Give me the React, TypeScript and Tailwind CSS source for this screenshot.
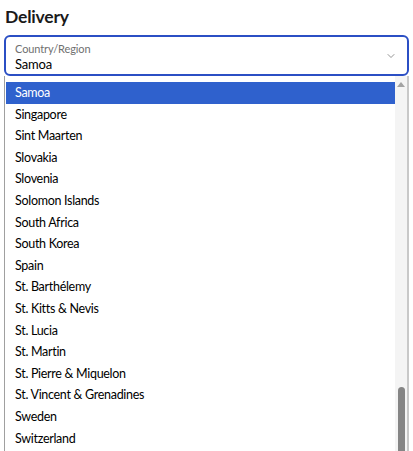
import { ChevronDown } from 'lucide-react';

const COUNTRIES = [
  'Samoa',
  'Singapore',
  'Sint Maarten',
  'Slovakia',
  'Slovenia',
  'Solomon Islands',
  'South Africa',
  'South Korea',
  'Spain',
  'St. Barthélemy',
  'St. Kitts & Nevis',
  'St. Lucia',
  'St. Martin',
  'St. Pierre & Miquelon',
  'St. Vincent & Grenadines',
  'Sweden',
  'Switzerland',
];

export default function App() {
  const selected = 'Samoa';

  return (
    <div
      className="h-[451px] w-[413px] overflow-hidden bg-white text-black"
      style={{ fontFamily: '"Segoe UI", Lato, sans-serif' }}
    >
      <h2 className="px-[5px] pt-[5px] text-[17.5px] font-bold leading-[24px] tracking-[-0.2px] text-[#1a1a1a]">Delivery</h2>

      {/* Select field */}
      <div className="mx-[4px] mt-[6px] flex h-[41px] items-center rounded-[6px] border-2 border-[#2b4fc4] pl-[9px] pr-[10px]">
        <div className="flex flex-1 flex-col pt-[2px]">
          <span className="text-[11px] leading-[14px] tracking-[-0.1px] text-[#707070]">Country/Region</span>
          <span className="text-[13px] leading-[16px] tracking-[-0.2px]">{selected}</span>
        </div>
        <ChevronDown size={12} strokeWidth={1.5} className="text-[#707070]" />
      </div>

      {/* Native-looking dropdown list */}
      <div className="mx-[4px] flex h-[400px] border-l border-r-2 border-[#a0a0a0] border-r-[#c8c8c8] bg-white">
        <ul className="flex-1 pl-px pt-[6px]">
          {COUNTRIES.map((c) => (
            <li
              key={c}
              className={`h-[21.6px] pl-[9px] text-[12.5px] leading-[21.6px] tracking-[-0.3px] ${
                c === selected ? 'bg-[#2f61cd] text-white' : 'text-black'
              }`}
            >
              {c}
            </li>
          ))}
        </ul>
        {/* Scrollbar */}
        <div className="flex w-[12px] flex-col items-center bg-[#f4f4f4]">
          <div className="mt-[6px] h-0 w-0 border-x-[4px] border-b-[5px] border-x-transparent border-b-[#a3a3a3]" />
          <div className="mt-[300px] w-[7px] flex-1 rounded-t-full bg-[#858585]" />
        </div>
      </div>
    </div>
  );
}
